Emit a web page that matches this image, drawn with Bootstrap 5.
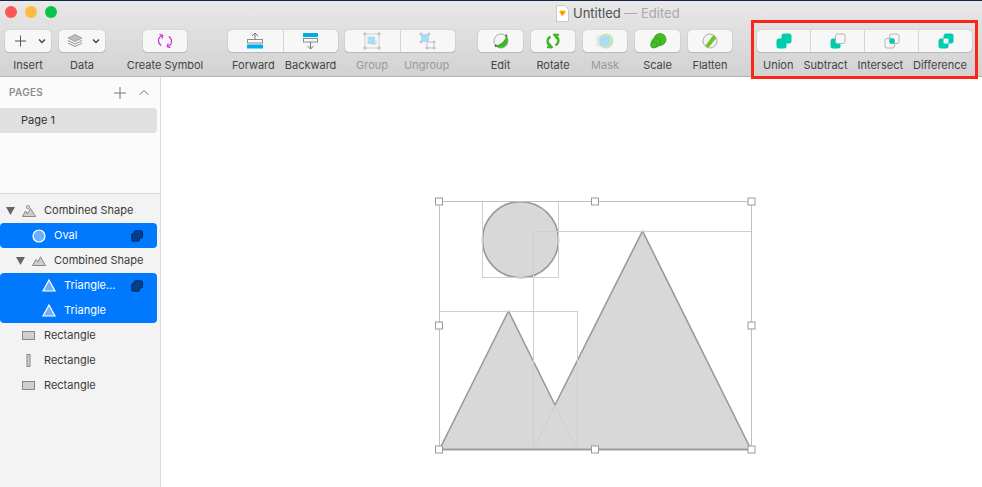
<!DOCTYPE html>
<html lang="en">
<head>
  <meta charset="UTF-8" />
  <title>Untitled - Edited</title>
  <link href="https://cdn.jsdelivr.net/npm/bootstrap@5.3.0/dist/css/bootstrap.min.css" rel="stylesheet"/>
  <style>
    html, body { height: 100%; overflow: hidden; }
    body { background: #fff; font-family: Inter, "Liberation Sans", sans-serif; font-size: 11px; color: #3c3c3c; }
    .window-top { background: linear-gradient(#172a45 1px, #e9e9e9 1px, #e6e6e6 8px, #d2d2d2 100%); height: 77px; border-bottom: 1px solid #b4b4b4; }
    .title-row { height: 30px; padding-left: 5px; }
    .traffic { width: 12px; height: 12px; border-radius: 50%; margin-top: 6px; }
    .t-red { background: #fc5753; }
    .t-yellow { background: #fdbb3f; }
    .t-green { background: #0bc347; }
    .doc-title { left: 556px; top: 5px; height: 17px; font-size: 13px; }
    .doc-title b { font-weight: 400; color: #505050; }
    .doc-title span { color: #a9a9a9; }
    .tool-row { padding-left: 5px; }
    .tool { flex: none; }
    .tool-btn { height: 22px; background: #f7f7f7; border-radius: 4px; box-shadow: 0 0 1px rgba(0,0,0,.35), 0 1px 1px rgba(0,0,0,.12); }
    .split-btn { padding-left: 6px; gap: 3px; }
    .seg { border-left: 1px solid #d4d4d4; height: 100%; }
    .seg:first-child { border-left: 0; }
    .tool-label { height: 14px; margin-top: 6px; line-height: 14px; font-size: 11px; white-space: nowrap; color: #444; }
    .tool-off { color: #9a9a9a; }
    .tool-btn svg { display: block; }
    .bool-wrap { position: relative; }
    .red-box { position: absolute; left: -6px; right: -6px; top: -10px; height: 59px; border: 3px solid #fb2617; pointer-events: none; }
    .work { height: 410px; }
    .side { width: 161px; flex: none; background: #f3f3f3; border-right: 1px solid #dcdcdc; }
    .pages { height: 117px; background: #fbfbfb; border-bottom: 1px solid #d6d6d6; }
    .pages-head { height: 31px; padding: 0 10px 0 9px; font-size: 10px; font-weight: 600; color: #8b8b8b; letter-spacing: .3px; }
    .page-row { width: 157px; height: 25px; background: #e0e0e0; border-radius: 0 4px 4px 0; padding-left: 21px; color: #333; line-height: 25px; }
    .layers { padding-top: 4px; }
    .layer { height: 25px; width: 157px; color: #3a3a3a; font-size: 11px; }
    .lv0 { padding-left: 22px; }
    .lv1 { padding-left: 32px; }
    .lv2 { padding-left: 42px; }
    .tw { width: 9px; margin-left: -16px; margin-right: 7px; flex: none; }
    .ic { width: 14px; margin-right: 8px; flex: none; display: block; }
    .sel { background: #0079fe; color: #fff; }
    .sel-one { border-radius: 4px; }
    .sel-top { border-radius: 4px 4px 0 0; }
    .sel-bot { border-radius: 0 0 4px 4px; }
    .bool-mini { margin-left: auto; margin-right: 14px; display: block; }
    .stage { display: block; }
  </style>
</head>
<body>
  <div class="window-top position-relative">
    <div class="title-row d-flex gap-2">
      <div class="traffic t-red"></div>
      <div class="traffic t-yellow"></div>
      <div class="traffic t-green"></div>
    </div>
    <div class="doc-title position-absolute d-flex align-items-center gap-1">
      <svg width="13" height="17" viewBox="0 0 13 17"><path d="M.5.500h8l4 4v12H.5z" fill="#fff" stroke="#c8c8c8"/><path d="M3 7l1.500-1.500h4L10 7l-3.500 4z" fill="#fdb300"/><path d="M4.600 7h3l-1.500 4z" fill="#fe8a00"/></svg>
      <div><b>Untitled</b> <span>— Edited</span></div>
    </div>

    <div class="tool-row d-flex">
      <div class="tool text-center" style="width:46px">
        <div class="tool-btn split-btn d-flex align-items-center">
          <svg width="24" height="22" viewBox="0 0 24 22"><path d="M9.500 5.500v11M4 11h11" stroke="#555" stroke-width="1" fill="none"/></svg>
          <svg width="8" height="22" viewBox="0 0 8 22"><path d="M1 9.500l3 3 3-3" stroke="#444" stroke-width="1.400" fill="none"/></svg>
        </div>
        <div class="tool-label">Insert</div>
      </div>
      <div class="tool text-center ms-2" style="width:46px">
        <div class="tool-btn split-btn d-flex align-items-center">
          <svg width="24" height="22" viewBox="0 0 24 22"><path d="M10 4.500l7 3.500-7 3.500L3 8z" fill="#bdbdbd" stroke="#8f8f8f" stroke-width=".7"/><path d="M3 10.500l7 3.500 7-3.500M3 13l7 3.500L17 13" stroke="#909090" fill="none"/></svg>
          <svg width="8" height="22" viewBox="0 0 8 22"><path d="M1 9.500l3 3 3-3" stroke="#444" stroke-width="1.400" fill="none"/></svg>
        </div>
        <div class="tool-label">Data</div>
      </div>
      <div class="tool text-center" style="width:78px;margin-left:21px">
        <div class="tool-btn d-flex align-items-center justify-content-center mx-auto" style="width:44px">
          <svg width="16" height="16" viewBox="0 0 16 16" fill="none" stroke="#c92fd6" stroke-width="1.200"><path d="M5.500 2.500C3 3.200 1.500 5.200 1.500 7.800c0 2 1 3.700 2.800 4.700"/><path d="M10.500 13.500c2.500-.7 4-2.700 4-5.300 0-2-1-3.700-2.800-4.700"/><path d="M2.500 1.200l3.300 1.200-1 3.200M13.500 14.800l-3.300-1.200 1-3.200"/></svg>
        </div>
        <div class="tool-label">Create Symbol</div>
      </div>
      <div class="tool" style="width:110px;margin-left:24px">
        <div class="tool-btn d-flex align-items-center">
          <div class="seg flex-fill d-flex justify-content-center align-items-center">
            <svg width="18" height="18" viewBox="0 0 18 18" fill="none"><path d="M9 1v9M6 4l3-3 3 3" stroke="#777"/><rect x="1.500" y="7.500" width="15" height="3.500" fill="#f7f7f7" stroke="#8d8d8d"/><rect x="1" y="12.500" width="16" height="4" rx=".5" fill="#00aee6"/></svg>
          </div>
          <div class="seg flex-fill d-flex justify-content-center align-items-center">
            <svg width="18" height="18" viewBox="0 0 18 18" fill="none"><rect x="1" y="1" width="15" height="4" rx=".5" fill="#00aee6"/><rect x="1.500" y="6.500" width="14" height="3.500" fill="#f7f7f7" stroke="#8d8d8d"/><path d="M8.500 10v7M5.500 14l3 3 3-3" stroke="#777"/></svg>
          </div>
        </div>
        <div class="tool-label d-flex"><span style="margin-left:4px">Forward</span><span style="margin-left:10px">Backward</span></div>
      </div>
      <div class="tool" style="width:110px;margin-left:7px">
        <div class="tool-btn d-flex align-items-center">
          <div class="seg flex-fill d-flex justify-content-center align-items-center">
            <svg width="18" height="18" viewBox="0 0 18 18" fill="none"><rect x="2" y="2" width="14" height="14" stroke="#d0d0d0"/><rect x="4.500" y="4.500" width="7.500" height="7.500" fill="#a9dcf7"/><path d="M8 12h5V8" stroke="#cfcfcf"/><g fill="#f7f7f7" stroke="#aaa" stroke-width=".8"><circle cx="2" cy="2" r="1.200"/><circle cx="16" cy="2" r="1.200"/><circle cx="2" cy="16" r="1.200"/><circle cx="16" cy="16" r="1.200"/></g></svg>
          </div>
          <div class="seg flex-fill d-flex justify-content-center align-items-center">
            <svg width="18" height="18" viewBox="0 0 18 18" fill="none"><rect x="2" y="2" width="8" height="8" fill="#a9dcf7"/><rect x="8" y="10" width="7" height="6" stroke="#c4c4c4"/><g fill="#f7f7f7" stroke="#aaa" stroke-width=".8"><circle cx="2" cy="2" r="1"/><circle cx="10" cy="2" r="1"/><circle cx="2" cy="10" r="1"/><circle cx="15" cy="10" r="1"/><circle cx="8" cy="16" r="1"/><circle cx="15" cy="16" r="1"/></g></svg>
          </div>
        </div>
        <div class="tool-label tool-off d-flex"><span style="margin-left:11px">Group</span><span style="margin-left:16px">Ungroup</span></div>
      </div>
      <div class="tool text-center" style="width:45px;margin-left:23px">
        <div class="tool-btn d-flex align-items-center justify-content-center">
          <svg width="16" height="16" viewBox="0 0 16 16"><circle cx="8" cy="8" r="7" fill="#f4f4f4" stroke="#aaa"/><path d="M2.500 12.500C7 12 12 8 13.500 2.500 16 6 15 12 11 14c-3 1.500-6.500.8-8.500-1.500z" fill="#3eb522"/><circle cx="2.800" cy="12.800" r="1.200" fill="#666"/><circle cx="13.200" cy="2.800" r="1.200" fill="#666"/></svg>
        </div>
        <div class="tool-label">Edit</div>
      </div>
      <div class="tool text-center ms-2" style="width:44px">
        <div class="tool-btn d-flex align-items-center justify-content-center">
          <svg width="16" height="16" viewBox="0 0 16 16" fill="none" stroke="#3eb522" stroke-width="2.400"><path d="M5.500 3.500C2 5.500 1.500 10 4.500 12.500"/><path d="M3 9.500l4.500 5.500M6 14.500l-4-.5" stroke-width="2"/><path d="M10.500 12.500C14 10.500 14.500 6 11.500 3.500"/><path d="M13 6.500L8.500 1M10 1.500l4 .5" stroke-width="2"/></svg>
        </div>
        <div class="tool-label">Rotate</div>
      </div>
      <div class="tool text-center ms-2" style="width:44px">
        <div class="tool-btn d-flex align-items-center justify-content-center">
          <svg width="18" height="18" viewBox="0 0 18 18"><rect x="1" y="4" width="10" height="10" fill="#f0f0f0" stroke="#ddd"/><circle cx="10" cy="9" r="7.500" fill="#c4e6b8"/><rect x="4" y="4.500" width="9" height="9" fill="#a9dcf7"/></svg>
        </div>
        <div class="tool-label tool-off">Mask</div>
      </div>
      <div class="tool text-center ms-2" style="width:45px">
        <div class="tool-btn d-flex align-items-center justify-content-center">
          <svg width="18" height="18" viewBox="0 0 18 18" fill="#45bd26" stroke="#2c9414" stroke-width=".7"><circle cx="11" cy="7.500" r="6"/><circle cx="7" cy="10.500" r="4.500"/><circle cx="4.800" cy="12.800" r="3.200"/></svg>
        </div>
        <div class="tool-label">Scale</div>
      </div>
      <div class="tool text-center ms-2" style="width:44px">
        <div class="tool-btn d-flex align-items-center justify-content-center">
          <svg width="16" height="16" viewBox="0 0 16 16"><circle cx="8" cy="8" r="7" fill="#f4f4f4" stroke="#aaa"/><path d="M3.500 12.500L11 2.500c1 0 3 1.500 3 3L6.500 14.500C5 14.500 4 13.500 3.500 12.500z" fill="#6cc623"/></svg>
        </div>
        <div class="tool-label">Flatten</div>
      </div>
      <div class="tool bool-wrap" style="width:215px;margin-left:25px">
        <div class="tool-btn d-flex align-items-center">
          <div class="seg flex-fill d-flex justify-content-center align-items-center">
            <svg width="16" height="16" viewBox="0 0 16 16" fill="#00cdb0"><rect x=".5" y="5.500" width="10" height="10" rx="2.500"/><rect x="5.500" y=".5" width="10" height="10" rx="2.500"/></svg>
          </div>
          <div class="seg flex-fill d-flex justify-content-center align-items-center">
            <svg width="16" height="16" viewBox="0 0 16 16"><rect x=".5" y="5.500" width="10" height="10" rx="2.500" fill="#00cdb0"/><rect x="5.500" y="1" width="9.500" height="9.500" rx="2" fill="#f7f7f7" stroke="#b5b5b5"/></svg>
          </div>
          <div class="seg flex-fill d-flex justify-content-center align-items-center">
            <svg width="16" height="16" viewBox="0 0 16 16"><rect x="5.500" y="1" width="9.500" height="9.500" rx="2" fill="none" stroke="#b5b5b5"/><rect x="1" y="5.500" width="9.500" height="9.500" rx="2" fill="none" stroke="#b5b5b5"/><rect x="5.500" y="5.500" width="5" height="5" rx="1.500" fill="#00cdb0"/></svg>
          </div>
          <div class="seg flex-fill d-flex justify-content-center align-items-center">
            <svg width="16" height="16" viewBox="0 0 16 16"><rect x=".5" y="5.500" width="10" height="10" rx="2.500" fill="#00cdb0"/><rect x="5.500" y=".5" width="10" height="10" rx="2.500" fill="#00cdb0"/><rect x="5.500" y="5.500" width="5" height="5" rx="1" fill="#f7f7f7"/></svg>
          </div>
        </div>
        <div class="tool-label d-flex justify-content-between" style="padding:0 5px 0 6px"><span>Union</span><span>Subtract</span><span>Intersect</span><span>Difference</span></div>
        <div class="red-box"></div>
      </div>
    </div>
  </div>

  <div class="work d-flex">
    <div class="side">
      <div class="pages">
        <div class="pages-head d-flex align-items-center justify-content-between">
          <span>PAGES</span>
          <span class="d-flex align-items-center gap-2">
            <svg width="12" height="12" viewBox="0 0 12 12"><path d="M6 0v12M0 6h12" stroke="#777" fill="none"/></svg>
            <svg width="12" height="12" viewBox="0 0 12 12" class="ms-1"><path d="M1.500 8L6 3.500 10.500 8" stroke="#777" fill="none"/></svg>
          </span>
        </div>
        <div class="page-row">Page 1</div>
      </div>
      <div class="layers">
        <div class="layer d-flex align-items-center lv0">
          <svg class="tw" width="9" height="8" viewBox="0 0 9 8"><path d="M0 0h9L4.500 8z" fill="#666"/></svg>
          <svg class="ic" height="12" viewBox="0 0 14 12"><path d="M.5 11.500L3.500 6l2 3L8.500 3.500l5 8z" fill="#cfcfcf" stroke="#888"/><circle cx="6" cy="2" r="1.700" fill="#cfcfcf" stroke="#888" stroke-width=".7"/></svg>
          <span>Combined Shape</span>
        </div>
        <div class="layer d-flex align-items-center lv1 sel sel-one">
          <svg class="ic" height="14" viewBox="0 0 14 14"><circle cx="7" cy="7" r="6" fill="#6db0ff" stroke="#fff" stroke-width="1.200"/></svg>
          <span>Oval</span>
          <svg class="bool-mini" width="12" height="12" viewBox="0 0 12 12"><path d="M4.500.8h5.700a1.300 1.300 0 0 1 1.300 1.300v4.600a1.300 1.300 0 0 1-1.300 1.300H8.500v1.900a1.300 1.300 0 0 1-1.300 1.300H2a1.300 1.300 0 0 1-1.300-1.300V5a1.300 1.300 0 0 1 1.300-1.300h1.200V2.100A1.300 1.300 0 0 1 4.500.8z" fill="#00408f" stroke="#00224f" stroke-width=".9"/></svg>
        </div>
        <div class="layer d-flex align-items-center lv1">
          <svg class="tw" width="9" height="8" viewBox="0 0 9 8"><path d="M0 0h9L4.500 8z" fill="#666"/></svg>
          <svg class="ic" height="10" viewBox="0 0 14 10"><path d="M.5 9.500L4 3.500l2 2.500L8.500.8l5 8.700z" fill="#cfcfcf" stroke="#888"/></svg>
          <span>Combined Shape</span>
        </div>
        <div class="layer d-flex align-items-center lv2 sel sel-top">
          <svg class="ic" height="13" viewBox="0 0 14 13"><path d="M7 1l6 11H1z" fill="#6db0ff" stroke="#fff" stroke-width="1.200"/></svg>
          <span>Triangle...</span>
          <svg class="bool-mini" width="12" height="12" viewBox="0 0 12 12"><path d="M4.500.8h5.700a1.300 1.300 0 0 1 1.300 1.300v4.600a1.300 1.300 0 0 1-1.300 1.300H8.500v1.900a1.300 1.300 0 0 1-1.300 1.300H2a1.300 1.300 0 0 1-1.300-1.300V5a1.300 1.300 0 0 1 1.300-1.300h1.200V2.100A1.300 1.300 0 0 1 4.500.8z" fill="#00408f" stroke="#00224f" stroke-width=".9"/></svg>
        </div>
        <div class="layer d-flex align-items-center lv2 sel sel-bot">
          <svg class="ic" height="13" viewBox="0 0 14 13"><path d="M7 1l6 11H1z" fill="#6db0ff" stroke="#fff" stroke-width="1.200"/></svg>
          <span>Triangle</span>
        </div>
        <div class="layer d-flex align-items-center lv0">
          <svg class="ic" height="10" viewBox="0 0 14 10"><rect x=".5" y=".5" width="12" height="8" fill="#cfcfcf" stroke="#888"/></svg>
          <span>Rectangle</span>
        </div>
        <div class="layer d-flex align-items-center lv0">
          <svg class="ic" height="14" viewBox="0 0 14 14"><rect x="5" y=".5" width="3" height="12" fill="#cfcfcf" stroke="#888"/></svg>
          <span>Rectangle</span>
        </div>
        <div class="layer d-flex align-items-center lv0">
          <svg class="ic" height="10" viewBox="0 0 14 10"><rect x=".5" y=".5" width="12" height="8" fill="#cfcfcf" stroke="#888"/></svg>
          <span>Rectangle</span>
        </div>
      </div>
    </div>
    <div class="flex-grow-1">
      <!-- viewBox uses window coords so the numbers read off the screenshot directly -->
      <svg class="stage" width="821" height="410" viewBox="161 77 821 410">
        <path d="M439.500 449.500L508.500 311 555 405 642.500 231 751 449.500z" fill="#d8d8d8" stroke="#999" stroke-width="1.600" stroke-linejoin="round"/>
        <circle cx="520.500" cy="239.700" r="38" fill="#d8d8d8" stroke="#999" stroke-width="1.600"/>
        <g fill="none" stroke="#cfcfcf">
          <path d="M533.500 449.500L555 405l22.500 44.500"/>
          <rect x="482.500" y="201.500" width="76" height="76"/>
          <rect x="533.500" y="231.500" width="218" height="218"/>
          <rect x="439.500" y="311.500" width="138" height="138"/>
          <rect x="439.500" y="201.500" width="312" height="248" stroke="#c0c0c0"/>
        </g>
        <path d="M439.500 449.500H751" stroke="#999" stroke-width="1.400"/>
        <g fill="#fff" stroke="#9a9a9a">
          <rect x="435.500" y="198" width="7" height="7"/>
          <rect x="591.500" y="198" width="7" height="7"/>
          <rect x="748" y="198" width="7" height="7"/>
          <rect x="435.500" y="322" width="7" height="7"/>
          <rect x="748" y="322" width="7" height="7"/>
          <rect x="435.500" y="446" width="7" height="7"/>
          <rect x="591.500" y="446" width="7" height="7"/>
          <rect x="748" y="446" width="7" height="7"/>
        </g>
      </svg>
    </div>
  </div>
</body>
</html>
